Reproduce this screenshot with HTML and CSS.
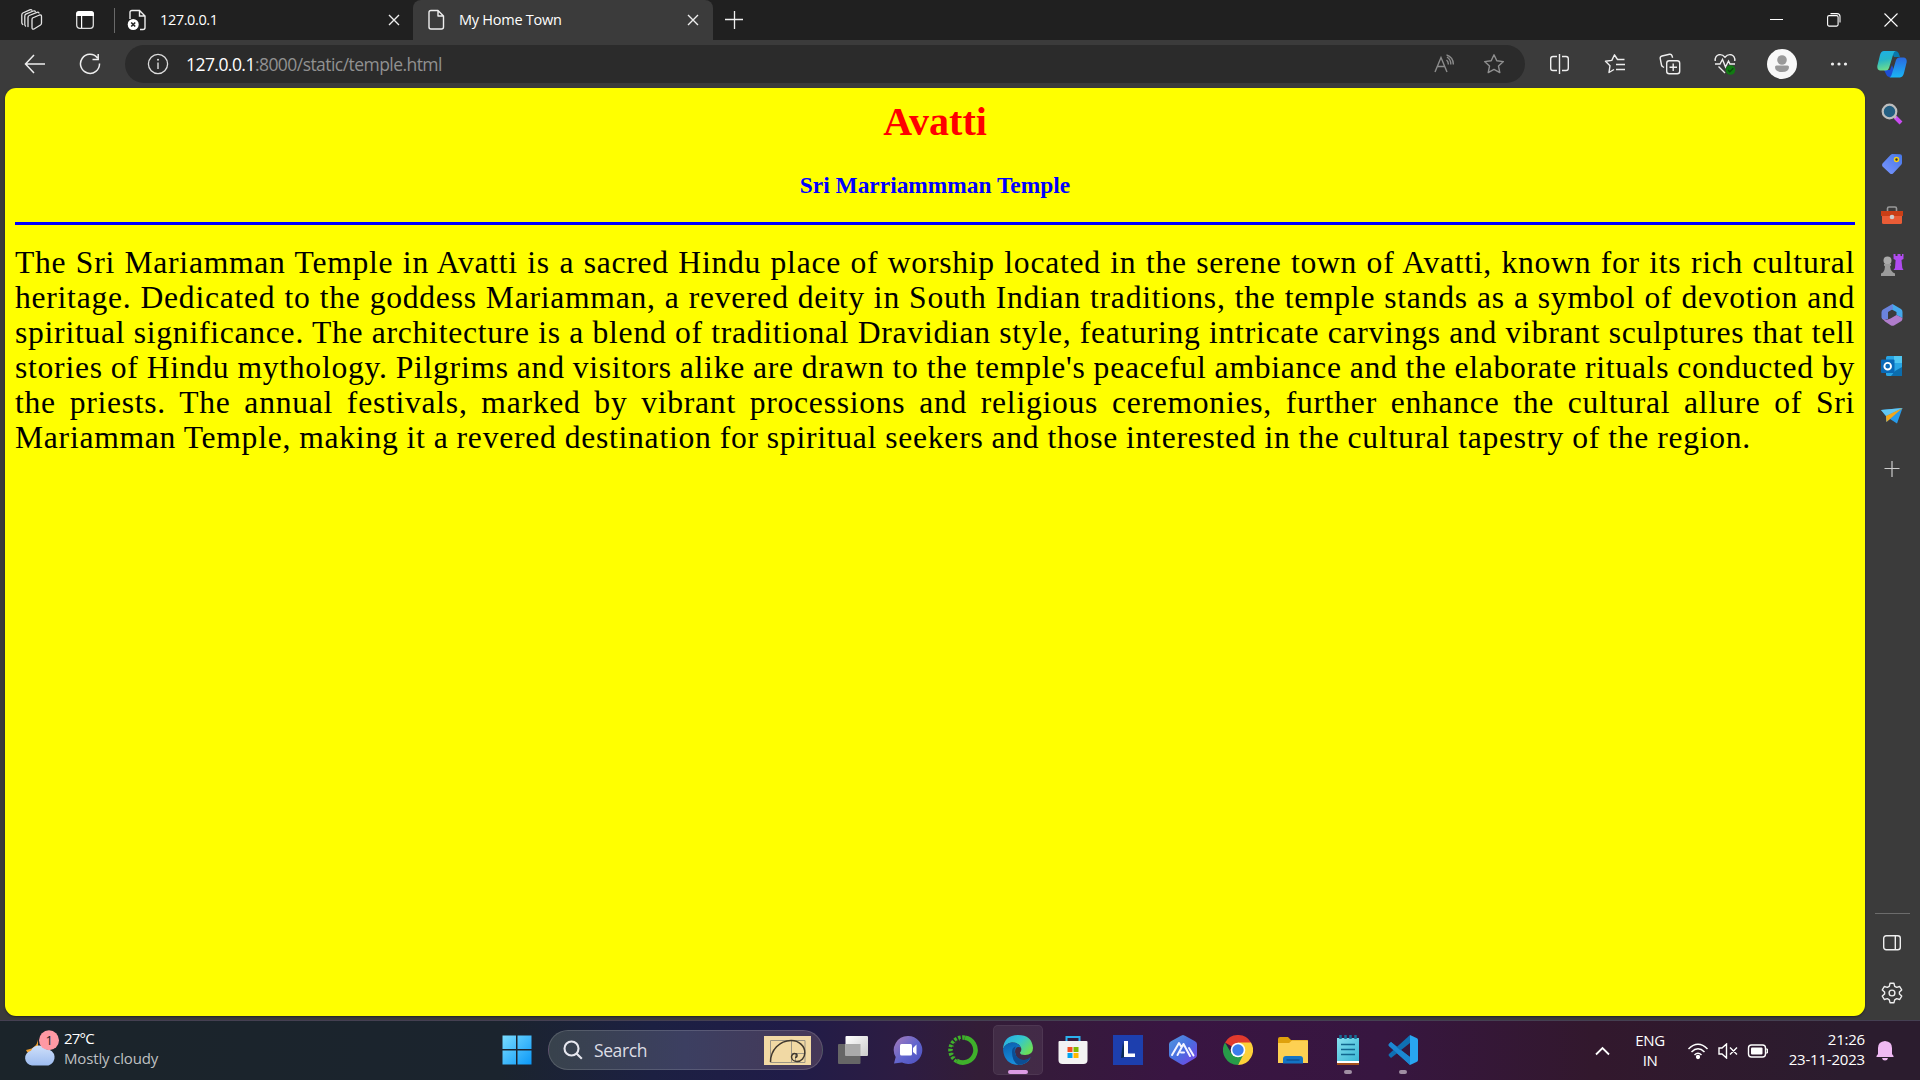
FILE: index.html
```html
<!DOCTYPE html>
<html lang="en">
<head>
<meta charset="utf-8">
<title>My Home Town</title>
<link rel="stylesheet" href="styles.css">
</head>
<body>
<div class="desktop">
  <header class="tabstrip">
    <div class="strip-tools">
      <svg class="workspaces" width="24" height="24" viewBox="0 0 24 24" fill="none" stroke="#e4e4e4" stroke-width="1.300" stroke-linejoin="round" stroke-linecap="round"><path d="M12.500 10 19.500 7q2-.5 2 1.500v6.500q0 1.500-1 2l-6.500 4q-2 .8-2-1.500v-7.500q0-1.500.5-2Z"/><path d="M8 18.500V9.500q0-1.500 1.200-2L17 4.300q1.500-.4 2 .7M2.800 16.500q-1-.7-1-2V7q0-1.500 1-2l7-3.200q1.500-.5 2 .3M5.500 18q-.7-.5-.7-1.700V8.200q0-1.500 1-2L13.300 3q1.500-.5 2 .4"/></svg>
      <svg class="tab-menu" width="20" height="20" viewBox="0 0 20 20"><rect x="1.700" y="1.700" width="16.600" height="16.600" rx="3" fill="none" stroke="#ddd" stroke-width="1.300"/><path d="M1 6V4q0-3 3-3h12q3 0 3 3v2ZM6 6h1.200v12H6Z" fill="#fff"/></svg>
    </div>
    <div class="tab">
      <svg width="20" height="22" viewBox="0 0 20 22"><path d="M3 10V3.500Q3 1.500 5 1.500h7.500L18 7v11.500q0 2-2 2h-3M12.500 1.500V7H18" fill="none" stroke="#eee" stroke-width="1.400"/><circle cx="6.200" cy="15.500" r="5.500" fill="#fff"/><path d="m4.200 13.500 4 4m0-4-4 4" stroke="#222" stroke-width="1.600"/></svg>
      <span class="tab-title tab-host">127.0.0.1</span>
      <svg class="close" width="12" height="12" viewBox="0 0 12 12"><path d="m1 1 10 10M11 1 1 11" stroke="#eee" stroke-width="1.400"/></svg>
    </div>
    <div class="tab tab-active">
      <svg width="18" height="22" viewBox="0 0 18 22"><path d="M11 1.500H4q-2 0-2 2v14.500q0 2 2 2h10.500q2 0 2-2V7Zm0 0V7h5.500" fill="none" stroke="#eee" stroke-width="1.400" stroke-linejoin="round"/></svg>
      <span class="tab-title">My Home Town</span>
      <svg class="close" width="12" height="12" viewBox="0 0 12 12"><path d="m1 1 10 10M11 1 1 11" stroke="#eee" stroke-width="1.400"/></svg>
    </div>
    <svg class="new-tab" width="18" height="18" viewBox="0 0 18 18"><path d="M9.500 0v18M0 8.500h18" stroke="#eee" stroke-width="1.300"/></svg>
    <div class="window-buttons">
      <svg width="14" height="14" viewBox="0 0 14 14"><path d="M0 6.500h13" stroke="#fff"/></svg>
      <svg width="14" height="14" viewBox="0 0 14 14" fill="none" stroke="#fff" stroke-width="1.100"><rect x=".6" y="2.600" width="10.500" height="10.500" rx="1.500"/><path d="M3.500.6h6.500q3 0 3 3v6"/></svg>
      <svg width="14" height="14" viewBox="0 0 14 14"><path d="m.5.5 13 13m0-13-13 13" stroke="#fff" stroke-width="1.100"/></svg>
    </div>
  </header>

  <nav class="toolbar">
    <svg class="back" width="22" height="20" viewBox="0 0 22 20"><path d="M10 1 1.500 10l8.500 9M1.500 10H21" fill="none" stroke="#eee" stroke-width="1.500"/></svg>
    <svg class="reload" width="22" height="22" viewBox="0 0 22 22"><path d="M18.500 5A9.500 9.500 0 1 0 20.500 10.500M19.200 1v5.500H13.500" fill="none" stroke="#eee" stroke-width="1.500"/></svg>
    <div class="address">
      <svg width="22" height="22" viewBox="0 0 22 22"><circle cx="11" cy="11" r="9.600" fill="none" stroke="#ddd" stroke-width="1.300"/><path d="M11 9.500V16" stroke="#ddd" stroke-width="1.400"/><circle cx="11" cy="6.700" r="1" fill="#ddd"/></svg>
      <span class="url"><span class="host">127.0.0.1</span>:8000/static/temple.html</span>
      <svg class="read-aloud" width="20" height="20" viewBox="0 0 20 20" fill="none" stroke="#8c8c8c" stroke-width="1.400"><path d="m1 18 6-14.500L13 18M3.300 12.500h7.400M12.500 6q2 1.500 1.800 4.500M13 3q4 2.500 3.800 7.500M12.500.8q7 2.500 6.800 9.700"/></svg>
      <svg width="22" height="22" viewBox="0 0 22 22"><path d="m11 1.800 2.800 6 6.600.8-4.900 4.500 1.300 6.500-5.800-3.200-5.800 3.200 1.300-6.500L1.600 8.600l6.600-.8Z" fill="none" stroke="#909090" stroke-width="1.400" stroke-linejoin="round"/></svg>
    </div>
    <div class="actions">
      <div class="action"><svg width="22" height="22" viewBox="0 0 22 22" fill="none" stroke="#eee" stroke-width="1.400"><path d="M8 3.500H4q-2.300 0-2.300 2.300v9.400q0 2.300 2.300 2.300h4M13 3.500h4q2.300 0 2.300 2.300v9.400q0 2.300-2.300 2.300h-4M10.500 1v20"/></svg></div>
      <div class="action"><svg width="22" height="22" viewBox="0 0 22 22" fill="none" stroke="#eee" stroke-width="1.400" stroke-linejoin="round"><path d="m20.500 6.500h-7L10.500 1.800 7.800 7.400l-6.300.9L6 12.700 5 19.500l5-3M12 11.500h9M12 16.500h9"/></svg></div>
      <div class="action"><svg width="22" height="22" viewBox="0 0 22 22" fill="none" stroke="#eee" stroke-width="1.400"><rect x="7.700" y="7.700" width="13" height="13" rx="2.500"/><path d="M14.200 10.500v7.500m-3.700-3.700H18M5 14.500 3.500 13.500Q2.700 13 2.500 12L1.200 5.500Q1 3.500 3 3l7.500-1.700q2-.3 2.500 1.500l.6 2"/></svg></div>
      <div class="action"><svg width="22" height="22" viewBox="0 0 22 22" fill="none" stroke="#eee" stroke-width="1.400"><path d="M1.200 8Q.8 3 5 1.700q3.500-.6 6 2.500 2.500-3.100 6-2.500Q21.200 3 20.800 8M1 11h5l2.500-4.500L11.500 14l3-6 1.500 3h5M4.500 13.500 11 20"/><circle cx="16.500" cy="17" r="4.800" fill="#117a12" stroke="none"/><path d="m14 17 1.800 1.800 3.500-3.500" stroke="#0b4a0c"/></svg></div>
      <div class="action avatar-cell"><svg width="30" height="30" viewBox="0 0 30 30"><circle cx="15" cy="15" r="15" fill="#f8f8f8"/><circle cx="15" cy="11" r="4.800" fill="#999"/><path d="M9.500 16.500h11q1.500 0 1.500 1.500 0 5-7 5t-7-5q0-1.500 1.500-1.500Z" fill="#999"/></svg></div>
      <div class="action"><svg width="18" height="6" viewBox="0 0 18 6" fill="#eee"><circle cx="2.500" cy="3" r="1.600"/><circle cx="9" cy="3" r="1.600"/><circle cx="15.500" cy="3" r="1.600"/></svg></div>
      <div class="action copilot"><svg width="30" height="28" viewBox="0 0 30 28"><defs><linearGradient id="cpA" x2=".2" y2="1"><stop stop-color="#1cb0e8"/><stop offset=".5" stop-color="#27b5c7"/><stop offset="1" stop-color="#6bdc8e"/></linearGradient><linearGradient id="cpB" x2="0" y2="1"><stop stop-color="#2a68e0"/><stop offset="1" stop-color="#1ab5f5"/></linearGradient></defs><path d="M14 1h4q3 0 4 3l1 3h-6Z" fill="#0878ad"/><path d="M7 20h6l2-5 3 8-2 4h-3q-3 0-4-3Z" fill="#1d4fd6"/><path d="M7 1h12q-2 0-3 4l-4 13q-1 2.500-3 2.500H3Q0 20 .3 16L3 5Q4 1 7 1Z" fill="url(#cpA)"/><path d="M22 7.500h5q3 .5 2.700 4.500L27 23q-1 4-4 4.500H12q2 0 3-4L19 10q1-2.500 3-2.500Z" fill="url(#cpB)"/></svg></div>
    </div>
  </nav>

  <div class="browser-body">
    <main class="page">
      <h1>Avatti</h1>
      <h3>Sri Marriammman Temple</h3>
      <hr>
      <p class="story">
        <span class="line">The Sri Mariamman Temple in Avatti is a sacred Hindu place of worship located in the serene town of Avatti, known for its rich cultural</span>
        <span class="line">heritage. Dedicated to the goddess Mariamman, a revered deity in South Indian traditions, the temple stands as a symbol of devotion and</span>
        <span class="line">spiritual significance. The architecture is a blend of traditional Dravidian style, featuring intricate carvings and vibrant sculptures that tell</span>
        <span class="line">stories of Hindu mythology. Pilgrims and visitors alike are drawn to the temple's peaceful ambiance and the elaborate rituals conducted by</span>
        <span class="line">the priests. The annual festivals, marked by vibrant processions and religious ceremonies, further enhance the cultural allure of Sri</span>
        <span class="line line-last">Mariamman Temple, making it a revered destination for spiritual seekers and those interested in the cultural tapestry of the region.</span>
      </p>
    </main>
    <aside class="sidebar">
      <div class="side-item"><svg width="22" height="22" viewBox="0 0 22 22"><path d="m14 14 6 6" stroke="#c94bf2" stroke-width="4"/><path d="m13 13 2 2" stroke="#bbb" stroke-width="2"/><circle cx="8.500" cy="8.500" r="6.800" fill="#245f82" stroke="#bdbdbd" stroke-width="2.200"/></svg></div>
      <div class="side-item"><svg width="22" height="22" viewBox="0 0 22 22"><defs><linearGradient id="tg" x1="1" x2="0" y2="1"><stop stop-color="#4677e8"/><stop offset="1" stop-color="#7b96ff"/></linearGradient></defs><path d="m11 1 8 .2q2 0 2 2V10q0 1-1 2l-8 8.500q-1.500 1-3 0l-7.500-7q-1-1.500 0-3L9.500 2Z" fill="url(#tg)"/><circle cx="15.500" cy="6.500" r="2" fill="#333" stroke="#f4cf18" stroke-width="1.500"/></svg></div>
      <div class="side-item"><svg width="24" height="20" viewBox="0 0 24 20"><path d="M7.500 6V3.500Q7.500 2 9 2h6q1.500 0 1.500 1.500V6" fill="none" stroke="#999" stroke-width="1.600"/><rect x="2" y="8" width="20" height="11" rx="1.500" fill="#e95c36"/><path d="M1 6h22v5H1Z" fill="#c93e16"/><circle cx="12" cy="12" r="2.300" fill="#ccc"/></svg></div>
      <div class="side-item"><svg width="24" height="24" viewBox="0 0 24 24"><path d="M13.500 1h2v2h2V1h3v2h1.500V1h1.500v5l-2 1 .8 8 1.200 2H13.500l1.500-2 .6-8-2-1Z" fill="#b04bf0"/><circle cx="7.500" cy="7.500" r="4" fill="#aaa"/><path d="M4 11h7v1.500l-1 1q0 3 3 6l2 1v2.500H1V20.500l2-1q2-3 2-6l-1-1Z" fill="#9b9b9b"/></svg></div>
      <div class="side-item"><svg width="22" height="24" viewBox="0 0 22 24"><path d="M11.500 1 20 6q1.500 1 1.500 3v6l-6-3V9L9 5.500Z" fill="#45a9ed"/><path d="M11.500 1 2 6.500Q.5 7.500.5 9.500v5Q1 18 7 16V9l5-3Z" fill="#6a83dc"/><path d="m1 15 3 3.500 6 4q1.500.6 3 0l7.500-4.500q1-1 1-3l-6-3-6 3.500Q5 18 1 15Z" fill="#b07dcc"/></svg></div>
      <div class="side-item"><svg width="22" height="22" viewBox="0 0 22 22"><rect x="5" y="1" width="16" height="20" rx="1.500" fill="#28a5e4"/><path d="M13 1h8v7h-8Z" fill="#4fc6f1"/><path d="M14 16l7-4v9H10Z" fill="#0b6dad"/><rect x="0" y="4.500" width="13.500" height="13.500" rx="1" fill="#0969b7"/><circle cx="6.700" cy="11.200" r="3.300" fill="none" stroke="#fff" stroke-width="1.900"/></svg></div>
      <div class="side-item"><svg width="22" height="18" viewBox="0 0 22 18"><path d="m0 3 21.500-2L16 16.500 9 12l-4 3V9Z" fill="#289bea"/><path d="M0 3 21.500 1 5 9Z" fill="#62c7f2"/><path d="M5 9 21.500 1 9 12l-3.500 3Z" fill="#f2a71b"/></svg></div>
      <div class="side-item side-plus"><svg width="16" height="16" viewBox="0 0 16 16"><path d="M8 0v16M.5 7.500h15" stroke="#ccc" stroke-width="1.200"/></svg></div>
      <div class="side-foot">
        <div class="side-item"><svg width="20" height="18" viewBox="0 0 20 18" fill="none" stroke="#eee" stroke-width="1.400"><rect x="1.700" y="1.700" width="16.600" height="14.100" rx="2.500"/><path d="M13.300 1.700v14"/></svg></div>
        <div class="side-item"><svg width="22" height="22" viewBox="0 0 22 22" fill="none" stroke="#eee" stroke-width="1.400" stroke-linejoin="round"><path d="M9 1.300h4l.7 3 2 1.100 3-.9 2 3.400-2.300 2.100v2l2.300 2.100-2 3.400-3-.9-2 1.200-.7 2.900H9l-.7-2.900-2-1.200-3 .9-2-3.400L3.600 12v-2L1.300 7.900l2-3.400 3 .9 2-1.100Z"/><circle cx="11" cy="11" r="2.900"/></svg></div>
      </div>
    </aside>
  </div>

  <footer class="taskbar">
    <div class="weather">
      <svg width="36" height="36" viewBox="0 0 36 36"><defs><linearGradient id="cl" x2="0" y2="1"><stop stop-color="#cfe0fa"/><stop offset="1" stop-color="#9dbcf0"/></linearGradient></defs><path d="M14 6q1 12-12 14 3 7 12 3Z" fill="#f0a030"/><path d="M8 35.500a7.500 7.500 0 0 1-1-14.800 9 9 0 0 1 15.500-1.500 8.300 8.300 0 0 1 2 16.300Z" fill="url(#cl)"/><circle cx="25" cy="10.200" r="10" fill="#ff99a4"/><text x="21.500" y="15" class="badge">1</text></svg>
      <div class="weather-text"><span class="temperature">27°C</span><span class="sky">Mostly cloudy</span></div>
    </div>
    <div class="apps">
      <div class="app"><svg width="30" height="30" viewBox="0 0 30 30"><defs><linearGradient id="wn" x2="1" y2="1"><stop stop-color="#79dcff"/><stop offset="1" stop-color="#0b98f8"/></linearGradient></defs><path d="M.5.500H14V14H.500ZM15.500.500h14V14h-14ZM.500 15.500H14v14H.500ZM15.500 15.500h14v14h-14Z" fill="url(#wn)"/></svg></div>
      <div class="search">
        <svg width="20" height="20" viewBox="0 0 20 20" fill="none" stroke="#e7e7ef" stroke-width="2.100"><circle cx="8.500" cy="8.500" r="7"/><path d="m13.500 13.500 5.300 5.300"/></svg>
        <span>Search</span>
        <svg class="doodle" width="47" height="29" viewBox="0 0 47 29"><path fill="#f1d9a4" d="M0 0h47v29H0z"/><g fill="none" stroke="#9c9584"><path d="M6.500 4.500h34.500v22h-34.500ZM27.500 4.500v22M27.500 17.500h13.500M31.500 17.500v9"/></g><path d="M6.500 26A20.500 21.500 0 0 1 27 4.500 13.500 12 0 0 1 40.800 17 8 8.500 0 0 1 33 25.500 5.500 5 0 0 1 27.500 21 3.300 3.500 0 0 1 31 17.500 2 2 0 0 1 31 21.500" fill="none" stroke="#40382e" stroke-width="1.500"/></svg>
      </div>
      <div class="app after-search"><svg width="30" height="30" viewBox="0 0 30 30"><defs><linearGradient id="tv" x2="1" y2="1"><stop stop-color="#fff"/><stop offset="1" stop-color="#ccc"/></linearGradient></defs><rect y="9" width="22.500" height="20" rx="1" fill="#666"/><rect x="7.500" y="1" width="22.500" height="20" rx="1" fill="url(#tv)"/><path d="M7.500 9h15v12h-15Z" fill="#aaa"/></svg></div>
      <div class="app"><svg width="30" height="30" viewBox="0 0 30 30"><defs><linearGradient id="ch" x2="1" y2="1"><stop stop-color="#a97bb9"/><stop offset=".55" stop-color="#5f64ce"/><stop offset="1" stop-color="#4d4fbd"/></linearGradient></defs><path d="M15 1a14 14 0 1 1-6 26.500L1 28.500 2.700 22A14 14 0 0 1 15 1Z" fill="url(#ch)"/><rect x="7" y="9" width="12" height="11.500" rx="1.500" fill="#fff"/><path d="m20 13 3.500-3.500v10.500L20 17Z" fill="#fff"/></svg></div>
      <div class="app"><svg width="30" height="30" viewBox="0 0 30 30" fill="none" stroke="#3fb12b"><path d="M17 2.700A12.500 12.500 0 1 1 9 26" stroke-width="4.600"/><path d="M9 26A12.500 12.500 0 0 1 17 2.700" stroke-width="4.600" stroke-dasharray="2.600 1.400"/><path d="M9.500 24A10.500 10.500 0 0 1 15 4.500" stroke="#331c38" stroke-width="1.500" stroke-dasharray="2 2"/></svg></div>
      <div class="app app-current"><svg width="30" height="30" viewBox="0 0 30 30"><defs><linearGradient id="ed" x2="1" y2=".6"><stop stop-color="#26a8e8"/><stop offset=".55" stop-color="#34c8cc"/><stop offset="1" stop-color="#6bdf58"/></linearGradient><linearGradient id="eb" x2=".3" y2="1"><stop stop-color="#0a5fae"/><stop offset="1" stop-color="#1890df"/></linearGradient></defs><path d="M0 14Q1 0 15 0q14 0 15 13 0 7-8 7-5 0-5-2.500 2-1.500 1-5-2-5-9-5Q3 8 0 14Z" fill="url(#ed)"/><path d="M0 14Q3 7.500 9 7.500q7 0 9 5-6-2-6 4.500 1 8 9 8.500Q26 25 28 22q-4 8-13 8Q1 29 0 14Z" fill="url(#eb)"/><path d="M9 17q0-5 4-5.500-2 2-1 6.500 2 6.500 9 7 4-.5 6.500-3Q24 30 15 30q-6-4-6-13Z" fill="#0c4d93"/></svg><i class="running running-wide"></i></div>
      <div class="app"><svg width="30" height="30" viewBox="0 0 30 30"><path d="M8.500 7V2h13v5" fill="none" stroke="#2cb1ee" stroke-width="2"/><path d="M1.500 6h27q1 0 1 1v18q0 4-4 4h-21q-4 0-4-4V7q0-1 1-1Z" fill="#f3f3f3"/><path fill="#f25022" d="M9.500 12h5v5h-5z"/><path fill="#7fba00" d="M15.500 12h5v5h-5z"/><path fill="#00a4ef" d="M9.500 18h5v5h-5z"/><path fill="#ffb900" d="M15.500 18h5v5h-5z"/></svg></div>
      <div class="app"><svg width="30" height="30" viewBox="0 0 30 30"><path fill="#1d3fae" d="M0 0h30v30H0z"/><path d="M10 7 8 23l5-1Z" fill="#0b2c54"/><path d="M11 6h4v12.500h7V22H11Z" fill="#fff"/></svg></div>
      <div class="app"><svg width="30" height="30" viewBox="0 0 30 30"><defs><linearGradient id="hx" x2="1" y2="1"><stop stop-color="#5299df"/><stop offset=".5" stop-color="#496de0"/><stop offset="1" stop-color="#7b3fe6"/></linearGradient></defs><path d="m13 .8 2-.8 2 .8 10 5.500q2 1 2 3v11q0 2-2 3l-10 6-2 .7-2-.7-10-6q-2-1-2-3v-11q0-2 2-3Z" fill="url(#hx)"/><path d="m4 20 7-12 2.500 4M9.500 20 15.500 9 22 21M13 17.500h3M21 13l4.500 7.500" fill="none" stroke="#f4f4ff" stroke-width="2" stroke-linecap="round" stroke-linejoin="round"/></svg></div>
      <div class="app"><svg width="30" height="30" viewBox="0 0 30 30"><path d="M15 15 2 7.500A15 15 0 0 1 28 7.500Z" fill="#e13a2d"/><path d="M28 7.500A15 15 0 0 1 15 30l4-14-4-8.500Z" fill="#fdd039"/><path d="M2 7.500A15 15 0 0 0 15 30l6-11.500H8.500Z" fill="#279b49"/><circle cx="15" cy="15" r="7.300" fill="#fff"/><circle cx="15" cy="15" r="5.700" fill="#3b7ded"/></svg></div>
      <div class="app"><svg width="30" height="30" viewBox="0 0 30 30"><path d="M0 10V4q0-2 2-2h8l3 3h16q1 0 1 1v6Z" fill="#dfa10c"/><path d="M0 8h11l3-2.500h16V28H0Z" fill="#fdd052"/><path d="M5 28.500V24q0-3 3-3h14q3 0 3 3v4.500Z" fill="#1474c4"/><path d="M8.500 25h13" stroke="#0b4d8f" stroke-width="1.300"/></svg></div>
      <div class="app"><svg width="24" height="30" viewBox="0 0 24 30"><defs><linearGradient id="np" x2="1" y2="1"><stop stop-color="#86e0ef"/><stop offset="1" stop-color="#39b6d4"/></linearGradient></defs><path d="M1 25h22v5H1Z" fill="#a4501b"/><path d="M1 24h22v4H1Z" fill="#fff"/><path d="M1 3h22v23H1Z" fill="url(#np)"/><path d="M5 9.500h14M5 14.500h14M5 19.500h14" stroke="#12668e" stroke-width="1.700"/><path d="M4.500 0v4M9.500 0v4M14.500 0v4M19.500 0v4" stroke="#166f97" stroke-width="2.500"/></svg><i class="running"></i></div>
      <div class="app"><svg width="30" height="30" viewBox="0 0 30 30"><path d="m1 9 2-2 19 15v8L1 11q-1-1 0-2Z" fill="#1d8ad6"/><path d="m1 21 2 2L22 8V0L1 19q-1 1 0 2Z" fill="#0f6fb4"/><path d="m12 15-4.500-4L3 7 1 9q-1 1 0 2l20 18 1 1v-8Z" fill="#1b87d3"/><path d="m22 0 6.500 3q1.500.7 1.500 2v20q0 1.300-1.500 2L22 30Z" fill="#28a6f0"/></svg><i class="running"></i></div>
    </div>
    <div class="tray">
      <svg class="chevron" width="15" height="10" viewBox="0 0 15 10"><path d="m1 8.500 6.500-6.500L14 8.500" fill="none" stroke="#fff" stroke-width="1.800"/></svg>
      <div class="language"><span>ENG</span><span>IN</span></div>
      <div class="status">
        <svg width="22" height="18" viewBox="0 0 22 18" fill="none" stroke="#fff" stroke-width="1.500"><path d="M1.500 7Q11-2.500 20.500 7M4.500 10q6.500-6.500 13 0M7.500 13q3.500-3.500 7 0"/><circle cx="11" cy="15" r="1.400" fill="#fff"/></svg>
        <svg width="20" height="16" viewBox="0 0 20 16" fill="none" stroke="#fff" stroke-width="1.400"><path d="M1 5h3l4.500-4v14L4 11H1ZM12 4.500l7 7m0-7-7 7"/></svg>
        <svg width="22" height="14" viewBox="0 0 22 14"><rect x="1.500" y="1" width="17" height="12" rx="3" fill="none" stroke="#fff" stroke-width="1.400"/><rect x="4" y="3.500" width="11.500" height="7" rx="1" fill="#fff"/><path d="M19 5h1.500v4H19Z" stroke="#fff"/></svg>
      </div>
      <div class="clock"><span>21:26</span><span>23-11-2023</span></div>
      <svg class="bell" width="18" height="20" viewBox="0 0 18 20" fill="#efb9f3"><path d="M9 0q7 .5 7 7v6l1.500 2v1H.500v-1L2 13V7q0-6.500 7-7ZM6 17h6q-.5 2.500-3 2.500T6 17Z"/></svg>
    </div>
  </footer>
</div>
</body>
</html>
```
FILE: styles.css
```css
* { box-sizing: border-box; }
body { margin: 0; background: #3b3b3b; font-family: "Open Sans", "Noto Sans", sans-serif; color: #fff; }
svg { display: block; flex: none; }
.desktop { width: 1920px; height: 1080px; display: flex; flex-direction: column; overflow: hidden; background: #3b3b3b; }

.tabstrip { height: 40px; flex: none; display: flex; align-items: center; background: #202020; }
.strip-tools { width: 115px; height: 25px; display: flex; align-items: center; border-right: 1px solid #696969; padding-left: 20px; gap: 31px; }
.tab { width: 298px; height: 40px; display: flex; align-items: center; padding: 0 13px 0 12px; }
.tab-title { flex: 1; font-size: 14.5px; letter-spacing: -.25px; white-space: nowrap; padding: 0 0 2px 14px; }
.tab-host { letter-spacing: -.4px; padding-left: 13px; }
.tab-active { width: 300px; background: #3b3b3b; border-radius: 8px 8px 0 0; padding: 0 14px; }
.new-tab { margin-left: 12px; }
.window-buttons { margin-left: auto; display: flex; gap: 43px; padding-right: 22px; }

.toolbar { height: 48px; flex: none; display: flex; align-items: center; }
.back { margin-left: 24px; }
.reload { margin-left: 33px; }
.address { margin-left: 24px; width: 1400px; height: 38px; border-radius: 19px; background: #2b2b2b; display: flex; align-items: center; padding: 0 20px 0 22px; }
.url { margin-left: 17px; padding-bottom: 1px; font-size: 17.5px; letter-spacing: -.55px; color: #919191; white-space: nowrap; }
.host { color: #fff; }
.read-aloud { margin-left: auto; margin-right: 29px; }
.actions { display: flex; padding-left: 7px; }
.action { width: 55.200px; display: flex; justify-content: center; align-items: center; }
.avatar-cell { width: 59px; }
.copilot { width: 50px; }

.browser-body { height: 932px; flex: none; display: flex; padding-left: 5px; }
.page { width: 1860px; height: 928px; background: #ff0; border-radius: 11px; padding: 10px; color: #000; font-family: "Liberation Serif", serif; box-shadow: 0 1px 2px #222; }
h1 { margin: 0; padding-top: 1px; font-size: 40px; line-height: 45px; text-align: center; color: #f00; }
h3 { margin: 28px 0 0; font-size: 23.400px; line-height: 27px; text-align: center; color: #00f; }
hr { margin: 23px 0 0; border: 0; height: 3px; background: #00f; }
.story { margin: 20px 0 0; font-size: 31.600px; line-height: 35px; letter-spacing: .75px; word-spacing: -2px; }
.line { display: block; white-space: nowrap; text-align: justify; text-align-last: justify; }
.line-last { width: 1736px; }

.sidebar { width: 54px; display: flex; flex-direction: column; padding-top: 1px; }
.side-item { height: 50.300px; display: flex; align-items: center; justify-content: center; }
.side-plus { margin-top: 3px; }
.side-foot { width: 35px; margin: auto auto 2px; padding-top: 3px; border-top: 1px solid #6c6c6c; }

.taskbar { height: 60px; flex: none; display: flex; align-items: center; border-top: 1px solid #454052; background: linear-gradient(90deg, #1b242a 0%, #1b242e 26%, #1c2042 34%, #201c48 41%, #2d1c42 47%, #331d37 51%, #391542 61%, #371640 72%, #32182d 83%, #2b1c2e 96%); }
.weather { width: 489px; padding: 0 0 5px 24px; display: flex; align-items: center; gap: 4px; }
.weather-text { display: flex; flex-direction: column; font-size: 15px; line-height: 20px; letter-spacing: -.15px; }
.temperature { letter-spacing: -.8px; }
.sky { color: #bfc0c2; }
.badge { font-size: 13px; fill: #222; }
.apps { display: flex; align-items: center; padding-bottom: 1px; }
.app { width: 55px; height: 50px; display: flex; align-items: center; justify-content: center; position: relative; }
.app-current { width: 50px; margin: 0 2.500px; border-radius: 5px; background: #ffffff12; border: 1px solid #ffffff10; }
.running { position: absolute; bottom: 1px; left: calc(50% - 4px); width: 8px; height: 4px; border-radius: 2px; background: #a08fa3; }
.running-wide { left: calc(50% - 10px); width: 20px; bottom: 0; background: #dc9be4; }
.search { width: 275px; height: 40px; margin-left: 4px; border: 1px solid #ffffff24; border-radius: 20px; background: linear-gradient(90deg, #38424c, #3c3f61 50%, #463858); display: flex; align-items: center; padding: 0 11px 0 14px; font-size: 17.5px; color: #dddde5; letter-spacing: -.4px; gap: 11px; }
.doodle { margin-left: auto; }
.after-search { margin-left: 2px; }
.tray { margin-left: auto; display: flex; align-items: center; padding-right: 26px; font-size: 15px; line-height: 20px; }
.chevron { margin-right: 24px; }
.language { display: flex; flex-direction: column; align-items: center; width: 32px; letter-spacing: -.4px; padding-bottom: 2px; }
.status { display: flex; align-items: center; gap: 9px; margin-left: 21px; }
.clock { width: 96px; display: flex; flex-direction: column; align-items: flex-end; letter-spacing: -.2px; padding-bottom: 3px; }
.bell { margin-left: 11px; }
```
